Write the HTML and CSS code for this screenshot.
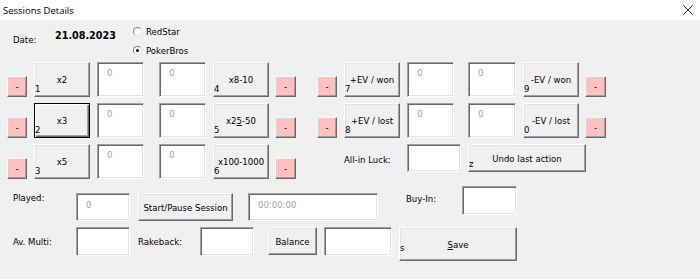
FILE: index.html
```html
<!DOCTYPE html>
<html lang="en">
<head>
    <meta charset="UTF-8">
    <title>Sessions Details</title>
    <link rel="stylesheet" href="styles.css">
</head>
<body>
    <div class="titlebar">
        <span class="title">Sessions Details</span>
        <svg class="close" width="10" height="10" viewBox="0 0 10 10">
            <path d="M0.5 0.5L9.5 9.5M9.5 0.5L0.5 9.5" stroke="#222" stroke-width="1"/>
        </svg>
    </div>
    <div class="form">
        <div class="head">
            <span class="date-lbl">Date:</span>
            <span class="date">21.08.2023</span>
            <div class="radios">
                <div class="opt"><span class="radio"></span>RedStar</div>
                <div class="opt"><span class="radio on"></span>PokerBros</div>
            </div>
        </div>

        <div class="rows">
            <div class="row">
                <button class="minus">-</button>
                <button class="btn">x2<span class="key">1</span></button>
                <div class="box">0</div>
                <div class="box gap-l">0</div>
                <button class="btn">x8-10<span class="key">4</span></button>
                <button class="minus tight">-</button>
                <button class="minus group">-</button>
                <button class="btn">+EV / won<span class="key">7</span></button>
                <div class="box">0</div>
                <div class="box gap-m w48">0</div>
                <button class="btn">-EV / won<span class="key">9</span></button>
                <button class="minus tight">-</button>
            </div>
            <div class="row">
                <button class="minus">-</button>
                <button class="btn focus">x3<span class="key">2</span></button>
                <div class="box">0</div>
                <div class="box gap-l">0</div>
                <button class="btn">x2<u>5</u>-50<span class="key">5</span></button>
                <button class="minus tight">-</button>
                <button class="minus group">-</button>
                <button class="btn">+EV / lost<span class="key">8</span></button>
                <div class="box">0</div>
                <div class="box gap-m w48">0</div>
                <button class="btn">-EV / lost<span class="key">0</span></button>
                <button class="minus tight">-</button>
            </div>
            <div class="row">
                <button class="minus">-</button>
                <button class="btn">x5<span class="key">3</span></button>
                <div class="box">0</div>
                <div class="box gap-l">0</div>
                <button class="btn">x100-1000<span class="key">6</span></button>
                <button class="minus tight">-</button>
                <span class="lbl luck">All-in Luck:</span>
                <div class="box field luck-box"></div>
                <button class="btn undo">Undo last action<span class="key">z</span></button>
            </div>
        </div>

        <div class="bottom">
            <div class="line">
                <span class="lbl first">Played:</span>
                <div class="box field">0</div>
                <button class="btn start">Start/Pause Session</button>
                <div class="box field timer">00:00:00</div>
                <span class="lbl buyin">Buy-In:</span>
                <div class="box field buyin-box"></div>
            </div>
            <div class="line">
                <span class="lbl first low">Av. Multi:</span>
                <div class="box field tall"></div>
                <span class="lbl rake low">Rakeback:</span>
                <div class="box field tall"></div>
                <button class="btn balance">Balance</button>
                <div class="box field tall result"></div>
                <button class="btn save"><u>S</u>ave<span class="key s-key">s</span></button>
            </div>
        </div>
    </div>
</body>
</html>
```

FILE: styles.css
```css
body {
    margin: 0;
    width: 700px;
    height: 279px;
    overflow: hidden;
    background-color: #f0f0f0;
    font-family: "DejaVu Sans Condensed", "DejaVu Sans", sans-serif;
    font-stretch: condensed;
    font-size: 9.5px;
    color: #000;
}
.titlebar {
    height: 20px;
    background: #fff;
    display: flex;
    align-items: center;
    justify-content: space-between;
    padding: 0 7px 0 3px;
}
.title {
    font-family: "Open Sans", sans-serif;
    font-stretch: normal;
    font-size: 9.5px;
}
.form {
    padding-left: 7px;
}

/* date + site */
.head {
    display: flex;
    align-items: flex-start;
    height: 42px;
}
.date-lbl {
    width: 42px;
    margin: 14px 0 0 6px;
    line-height: 12px;
}
.date {
    width: 78px;
    margin-top: 9px;
    font-weight: bold;
    font-size: 10.7px;
    line-height: 14px;
}
.radios {
    display: flex;
    flex-direction: column;
    gap: 7px;
    margin-top: 5px;
}
.opt {
    display: flex;
    align-items: center;
    gap: 4px;
    height: 12px;
}
.radio {
    box-sizing: border-box;
    width: 9px;
    height: 9px;
    border-radius: 50%;
    border: 1px solid;
    border-color: #808080 #e3e3e3 #e3e3e3 #808080;
    background: #fff;
    display: flex;
    align-items: center;
    justify-content: center;
}
.radio.on::after {
    content: "";
    width: 3px;
    height: 3px;
    border-radius: 50%;
    background: #000;
}

/* controls */
button {
    font: inherit;
    color: #000;
    padding: 0;
    cursor: pointer;
}
.btn {
    position: relative;
    box-sizing: border-box;
    width: 56px;
    height: 35px;
    background: #f0f0f0;
    border: 1px solid;
    border-color: #fff #696969 #696969 #fff;
    box-shadow: inset -1px -1px #a0a0a0, inset 1px 1px #e3e3e3;
}
.btn.focus {
    border-color: #000;
    box-shadow: inset 1px 1px #fff, inset -1px -1px #696969, inset -2px -2px #a0a0a0;
}
.key {
    position: absolute;
    left: 0;
    bottom: 3px;
    line-height: 1;
}
.s-key {
    bottom: 8px;
}
.minus {
    box-sizing: border-box;
    width: 20px;
    height: 21px;
    align-self: flex-end;
    background: #ffc0c0;
    border: 1px solid;
    border-color: #fff #696969 #696969 #fff;
    box-shadow: inset -1px -1px #a0a0a0;
    line-height: 1;
}
.minus.tight {
    width: 21px;
    margin-left: -1px;
}
.minus.group {
    margin-left: 14px;
}
.box {
    box-sizing: border-box;
    width: 47px;
    height: 35px;
    background: #fff;
    border: 1px solid;
    border-color: #a0a0a0 #fff #fff #a0a0a0;
    box-shadow: inset 1px 1px #696969, inset -1px -1px #e3e3e3;
    color: #a0a0a0;
    padding: 4px 0 0 9px;
    line-height: 12px;
}
.box.gap-l {
    margin-left: 8px;
}
.box.gap-m {
    margin-left: 7px;
}
.box.w48 {
    width: 48px;
}
.rows {
    display: flex;
    flex-direction: column;
    gap: 6px;
}
.row {
    display: flex;
    gap: 7px;
    height: 35px;
}
.lbl {
    line-height: 12px;
}
.luck {
    width: 56px;
    margin: 10px 0 0 41px;
}
.field {
    width: 54px;
    height: 28px;
    padding-top: 5px;
}
.luck-box {
    margin-left: 0;
}
.btn.undo {
    width: 118px;
    height: 28px;
}

/* bottom area */
.bottom {
    display: flex;
    flex-direction: column;
    gap: 6px;
    margin-top: 7px;
}
.line {
    display: flex;
    align-items: flex-start;
    height: 35px;
}
.line .lbl.first {
    width: 63px;
    margin: 6px 0 0 6px;
}
.line .lbl.low {
    margin-top: 9px;
}
.line .field {
    align-self: flex-end;
}
.line:last-child .field {
    align-self: flex-start;
}
.field.tall {
    height: 29px;
}
.btn.start {
    width: 95px;
    height: 28px;
    margin-left: 8px;
    align-self: flex-end;
}
.timer {
    width: 130px;
    margin-left: 15px;
}
.buyin {
    width: 56px;
    margin: 7px 0 0 28px;
}
.line .buyin-box {
    width: 55px;
    height: 29px;
    align-self: flex-start;
}
.rake {
    width: 62px;
    margin-left: 8px;
}
.btn.balance {
    width: 49px;
    height: 28px;
    margin-left: 14px;
}
.result {
    width: 68px;
    margin-left: 7px;
}
.btn.save {
    width: 118px;
    height: 34px;
    margin-left: 7px;
}
```
